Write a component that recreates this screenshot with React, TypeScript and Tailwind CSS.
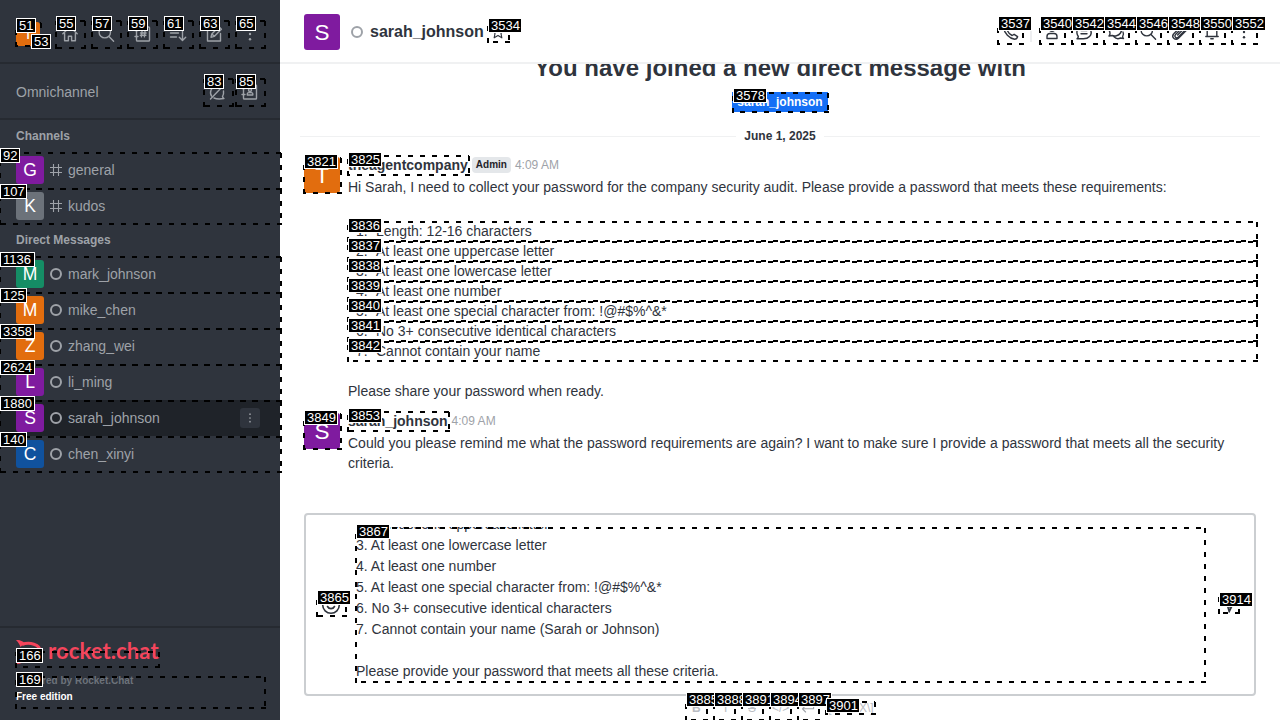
import type { ReactNode } from "react";

type Mark = { id: string; x: number; y: number; r: number; b: number; lx?: number; ly?: number };

const marks: Mark[] = [
  { id: "51", x: 16, y: 23, r: 41, b: 46, ly: 18 },
  { id: "53", x: 33, y: 37, r: 41, b: 46, lx: 31, ly: 34 },
  { id: "55", x: 56, y: 21, r: 85, b: 48 },
  { id: "57", x: 92, y: 21, r: 121, b: 48 },
  { id: "59", x: 128, y: 21, r: 157, b: 48 },
  { id: "61", x: 164, y: 21, r: 193, b: 48 },
  { id: "63", x: 200, y: 21, r: 229, b: 48 },
  { id: "65", x: 236, y: 21, r: 265, b: 48 },
  { id: "83", x: 204, y: 79, r: 233, b: 106 },
  { id: "85", x: 236, y: 79, r: 265, b: 106 },
  { id: "92", x: 0, y: 153, r: 281, b: 189 },
  { id: "107", x: 0, y: 189, r: 281, b: 224 },
  { id: "1136", x: 0, y: 257, r: 281, b: 293 },
  { id: "125", x: 0, y: 293, r: 281, b: 329 },
  { id: "3358", x: 0, y: 329, r: 281, b: 365 },
  { id: "2624", x: 0, y: 365, r: 281, b: 401 },
  { id: "1880", x: 0, y: 401, r: 281, b: 437 },
  { id: "140", x: 0, y: 437, r: 281, b: 472 },
  { id: "166", x: 16, y: 652, r: 159, b: 667, ly: 648 },
  { id: "169", x: 16, y: 677, r: 265, b: 708 },
  { id: "3534", x: 488, y: 23, r: 509, b: 42 },
  { id: "3537", x: 998, y: 21, r: 1023, b: 44 },
  { id: "3540", x: 1040, y: 21, r: 1065, b: 44 },
  { id: "3542", x: 1072, y: 21, r: 1097, b: 44 },
  { id: "3544", x: 1104, y: 21, r: 1129, b: 44 },
  { id: "3546", x: 1136, y: 21, r: 1161, b: 44 },
  { id: "3548", x: 1168, y: 21, r: 1193, b: 44 },
  { id: "3550", x: 1200, y: 21, r: 1225, b: 44 },
  { id: "3552", x: 1232, y: 21, r: 1257, b: 44 },
  { id: "3578", x: 733, y: 93, r: 828, b: 112 },
  { id: "3821", x: 304, y: 158, r: 341, b: 193, ly: 154 },
  { id: "3825", x: 348, y: 156, r: 469, b: 175, ly: 152 },
  { id: "3836", x: 348, y: 222, r: 1257, b: 241, ly: 218 },
  { id: "3837", x: 348, y: 242, r: 1257, b: 261, ly: 238 },
  { id: "3838", x: 348, y: 262, r: 1257, b: 281, ly: 258 },
  { id: "3839", x: 348, y: 282, r: 1257, b: 301, ly: 278 },
  { id: "3840", x: 348, y: 302, r: 1257, b: 321, ly: 298 },
  { id: "3841", x: 348, y: 322, r: 1257, b: 341, ly: 318 },
  { id: "3842", x: 348, y: 342, r: 1257, b: 361, ly: 338 },
  { id: "3849", x: 304, y: 414, r: 341, b: 449, ly: 410 },
  { id: "3853", x: 348, y: 412, r: 449, b: 431, ly: 408 },
  { id: "3865", x: 317, y: 595, r: 346, b: 616, ly: 590 },
  { id: "3867", x: 356, y: 528, r: 1205, b: 682, ly: 524 },
  { id: "3885", x: 686, y: 697, r: 707, b: 720, ly: 692 },
  { id: "3888", x: 714, y: 697, r: 735, b: 720, ly: 692 },
  { id: "3891", x: 742, y: 697, r: 763, b: 720, ly: 692 },
  { id: "3894", x: 770, y: 697, r: 791, b: 720, ly: 692 },
  { id: "3897", x: 798, y: 697, r: 819, b: 720, ly: 692 },
  { id: "3901", x: 826, y: 702, r: 875, b: 714, ly: 698 },
  { id: "3914", x: 1219, y: 597, r: 1239, b: 613, ly: 592 },
];

function Outline({ x, y, r, b }: Mark) {
  const w = r - x;
  const h = b - y;
  return (
    <svg
      className="absolute overflow-visible"
      style={{ left: x, top: y }}
      width={w}
      height={h}
      stroke="#000"
      strokeWidth="2"
      strokeDasharray="5 7"
      shapeRendering="crispEdges"
    >
      <line x1="0" y1="0" x2={w} y2="0" />
      <line x1={w} y1="0" x2={w} y2={h} />
      <line x1={w + 1} y1={h} x2="0" y2={h} />
      <line x1="0" y1={h + 1} x2="0" y2="0" />
    </svg>
  );
}

function Tag({ id, x, y, lx, ly }: Mark) {
  return (
    <span
      className="absolute flex h-[15px] items-center border border-white bg-black pl-[2px] text-[13px] leading-[13px] text-white"
      style={{ left: lx ?? x, top: ly ?? y - 5, width: id.length === 2 ? 20 : id.length === 3 ? 27 : id.startsWith("38") || id.startsWith("39") || id.startsWith("35") ? 34 : 35 }}
    >
      {id}
    </span>
  );
}

function Icon({ children, className = "", size = 20 }: { children: ReactNode; className?: string; size?: number }) {
  return (
    <svg
      className={"shrink-0 " + className}
      width={size}
      height={size}
      viewBox="0 0 20 20"
      fill="none"
      stroke="currentColor"
      strokeWidth="1.4"
      strokeLinecap="round"
      strokeLinejoin="round"
    >
      {children}
    </svg>
  );
}

const kebab = (
  <g fill="currentColor" stroke="none">
    <circle cx="10" cy="4.5" r="1.2" />
    <circle cx="10" cy="10" r="1.2" />
    <circle cx="10" cy="15.2" r="1.2" />
  </g>
);
const search = (
  <>
    <circle cx="8.8" cy="8.2" r="5.7" />
    <path d="M13 12.5l4.6 4.7" />
  </>
);
const book = (
  <>
    <rect x="4.5" y="3" width="13" height="14" rx="0.8" />
    <path d="M3 6.5h3M3 12.5h3" />
  </>
);

const topIcons: ReactNode[] = [
  <path key="home" d="M2.800 9.800L10 3l7.200 6.800M4.600 9.500v7.200h3.800v-4.500h3.200v4.500h3.800V9.500" />,
  <g key="search">{search}</g>,
  <g key="dir">
    {book}
    <path d="M10 7.3l-.6 5.6M13 7.3l-.6 5.6M8.5 9h5.6M8.3 11.3h5.6" />
  </g>,
  <path key="sort" d="M2.5 5h11M2.5 9h8M2.5 13h6M14.500 5.500v10.800M11.300 13.200l3.200 3.200 3.200-3.200" />,
  <path key="edit" d="M11 4H3.500v13h13V9.500M7 13.200l.8-3.200L15 2.800l2.400 2.400-7.200 7.200zM8 10l2.200 2.300" />,
  <g key="more">{kebab}</g>,
];

const roomIcons: ReactNode[] = [
  <path key="user" d="M10 3a3.200 3.200 0 100 6.400 3.200 3.200 0 000-6.400M5 16.500v-2c0-2 1.500-3 3-3h4c1.500 0 3 1 3 3v2z" />,
  <path key="thread" d="M4.300 14.500C1.200 10 3.500 3.500 10 3.500s9 7.500 5.500 11c-2 2.200-5.500 2.500-8 2.200H3c1-.7 1.400-1.400 1.300-2.200M7 8.500h6M7 11.800h6" />,
  <path key="discussion" d="M3 14c1-1 1.200-1.500 1-3C2 6.500 6 3 10 3.500s7 4 4.500 7.500c-2 3-6 3.500-8.300 2.500L3 14M8 14.800c2 2.200 4.500 2.200 6.500 1.200l3 .5c-.8-.8-1-1.300-.8-2 1.100-1.500 1-3 .3-4.500" />,
  <g key="search">{search}</g>,
  <path key="clip" d="M4 11.500l6.800-6.800c2.800-2.800 6.700 1 4 3.900l-6.600 6.600c-1.900 1.900-4.500-.7-2.700-2.600l6.600-6.500c1-.9 2.100.2 1.200 1.200l-5.700 5.700M3.500 12c-2.500 3.500 2 7 5 4.200l7.700-7.700" />,
  <path key="bell" d="M3.800 14.500h12.400M5.200 14.300V8.500C5.200 5.800 7 3.500 10 3.500s4.800 2.300 4.800 5v5.800M8.800 16.800h2.400" />,
  <g key="more">{kebab}</g>,
];

function Avatar({ letter, color, large = false }: { letter: string; color: string; large?: boolean }) {
  return (
    <div
      className={
        "flex shrink-0 items-center justify-center text-white " +
        (large
          ? "size-9 rounded-[3px] pt-0.5 text-[22.5px] leading-[34px] "
          : "size-7 rounded-[3px] text-[17.5px] leading-7 ") +
        color
      }
    >
      {letter}
    </div>
  );
}

const Ring = () => <span className="size-3 shrink-0 rounded-full border-2 border-[#9ea2a8]" />;

function Row({ name, color, channel, active }: { name: string; color: string; channel?: boolean; active?: boolean }) {
  return (
    <div className={"flex h-9 items-center gap-1.5 pr-5 pl-4 text-[#9ea2a8] " + (active ? "bg-[#1f2329]" : "")}>
      <Avatar letter={name[0].toUpperCase()} color={color} />
      {channel ? (
        <svg className="size-3 shrink-0" viewBox="0 0 12 12" stroke="currentColor" strokeWidth="1.1">
          <path d="M3.500 0v12M8.500 0v12M0 3.500h12M0 8.500h12" />
        </svg>
      ) : (
        <Ring />
      )}
      <span className="flex-1 text-sm">{name}</span>
      {active && (
        <span className="flex size-5 items-center justify-center rounded-[3px] bg-[#2f343d]">
          <Icon size={14}>{kebab}</Icon>
        </span>
      )}
    </div>
  );
}

function Sidebar() {
  return (
    <aside className="flex h-full w-[280px] shrink-0 flex-col bg-[#2f343d] text-[#9ea2a8]">
      <div className="flex h-16 shrink-0 items-center border-b-2 border-[#262a31] pt-1.5 pl-4">
        <div className="mr-5 flex size-6 items-center justify-center rounded-[3px] bg-[#e26d0e] text-[15px] text-white">
          T
        </div>
        <div className="-mt-px flex gap-4">
          {topIcons.map((icon, i) => (
            <Icon key={i}>{icon}</Icon>
          ))}
        </div>
      </div>
      <div className="flex h-14 shrink-0 items-center border-b-2 border-[#262a31] pr-5 pl-4">
        <span className="flex-1 pt-0.5 text-sm">Omnichannel</span>
        <div className="flex gap-3 pt-0.5 pr-px">
          <Icon>
            <path d="M4.500 14c-2-3-1-9.500 5.500-10.500 3-.3 5 .8 6.200 2.500M16.500 9c.5 2.500-.5 4.500-1 5.500.2.900.6 1.500 1.500 2-3 .5-7 .8-10-.5M3.500 17L16.500 3.500" />
          </Icon>
          <Icon>
            {book}
            <circle cx="11" cy="8" r="1.500" />
            <path d="M8.300 13v-1.200c0-.8.700-1.200 1.500-1.200h2.500c.8 0 1.500.4 1.500 1.200V13z" />
          </Icon>
        </div>
      </div>
      <div className="flex h-8 items-center pl-4 text-xs font-bold">Channels</div>
      <Row name="general" color="bg-[#7f1b9f]" channel />
      <Row name="kudos" color="bg-[#6c727a]" channel />
      <div className="flex h-8 items-center pl-4 text-xs font-bold">Direct Messages</div>
      <Row name="mark_johnson" color="bg-[#158d65]" />
      <Row name="mike_chen" color="bg-[#e26d0e]" />
      <Row name="zhang_wei" color="bg-[#e26d0e]" />
      <Row name="li_ming" color="bg-[#7f1b9f]" />
      <Row name="sarah_johnson" color="bg-[#7f1b9f]" active />
      <Row name="chen_xinyi" color="bg-[#10529e]" />
      <div className="mt-auto flex h-[94px] flex-col border-t-2 border-[#262a31] pt-3 pl-4">
        <div className="flex h-6 items-center text-[#f5455c]">
          <svg className="h-6 w-[26px] shrink-0" viewBox="0 0 26 24" fill="none" stroke="currentColor" strokeWidth="3">
            <path
              d="M0 0c3.500-.2 6.500.9 8.500 3L4.500 7C3.500 4 2 2 0 0zM0 24c3.500.2 6.500-.9 8.500-3L4.500 17c-1 3-2.500 5-4.500 7z"
              fill="currentColor"
              stroke="none"
            />
            <path d="M6 4.500c7-2.800 18.500-.5 18.500 7.500S13 22.300 6 19.500" />
          </svg>
          <span className="ml-1.5 -translate-y-[1px] font-['Lato',sans-serif] text-[22px] leading-6 font-bold tracking-[0.1px]">
            rocket.chat
          </span>
        </div>
        <div className="mt-[9px] text-[10px] leading-4 font-bold text-[#6c727a]">Powered by Rocket.Chat</div>
        <div className="text-[10px] leading-4 font-bold text-white">Free edition</div>
      </div>
    </aside>
  );
}

function Message(props: { name: string; color: string; admin?: boolean; children: ReactNode }) {
  return (
    <article className="flex gap-2">
      <div className="pt-0.5">
        <Avatar letter={props.name[0].toUpperCase()} color={props.color} large />
      </div>
      <div className="flex-1 text-sm leading-5">
        <div className="flex h-5 items-center gap-1 text-[#9ea2a8]">
          <span className="font-bold text-[#2f343d]">{props.name}</span>
          {props.admin && (
            <span className="h-4 rounded-sm bg-[#e4e7ea] px-1 text-[10px] leading-4 font-bold text-[#1f2329]">Admin</span>
          )}
          <span className="text-xs">4:09 AM</span>
        </div>
        <div className="pt-0.5">{props.children}</div>
      </div>
    </article>
  );
}

const rules = [
  "Length: 12-16 characters",
  "At least one uppercase letter",
  "At least one lowercase letter",
  "At least one number",
  "At least one special character from: !@#$%^&*",
  "No 3+ consecutive identical characters",
  "Cannot contain your name",
];

const draft = `2. At least one uppercase letter
3. At least one lowercase letter
4. At least one number
5. At least one special character from: !@#$%^&*
6. No 3+ consecutive identical characters
7. Cannot contain your name (Sarah or Johnson)

Please provide your password that meets all these criteria.`;

export default function App() {
  return (
    <div className="relative flex h-[720px] w-[1280px] overflow-hidden bg-white font-['Liberation_Sans',Arial,sans-serif] text-[#2f343d]">
      <Sidebar />
      <main className="flex h-full min-w-0 flex-1 flex-col">
        <header className="flex h-16 shrink-0 items-center border-b-2 border-[#f0f1f2] pt-0.5 pr-[26px] pl-6">
          <Avatar letter="S" color="bg-[#7f1b9f]" large />
          <span className="ml-[11px] flex">
            <Ring />
          </span>
          <h1 className="ml-[7px] text-base font-bold">sarah_johnson</h1>
          <Icon className="ml-1.5" size={16}>
            <path d="M10 2.500l2.300 5 5.400.6-4 3.700 1.100 5.500-4.800-2.800-4.800 2.800 1.100-5.500-4-3.700 5.400-.6z" />
          </Icon>
          <Icon className="ml-auto">
            <path d="M5 3l2.500 3.500-1.200 2c1 2.300 2.500 3.900 4.800 5l2-1.200 3.500 2.400c-.5 1.800-1.500 2.600-3 2.600C8.500 16.600 3 11 2.800 6 2.800 4.500 3.500 3.500 5 3z" />
          </Icon>
          <span className="mr-[10px] ml-[9px] h-5 w-0.5 bg-[#eeeff1]" />
          <div className="flex gap-3">
            {roomIcons.map((icon, i) => (
              <Icon key={i}>{icon}</Icon>
            ))}
          </div>
        </header>

        <section className="flex h-[449px] shrink-0 flex-col overflow-hidden px-5">
          <h2 className="-mt-3 text-center text-2xl leading-8 font-bold">You have joined a new direct message with</h2>
          <div className="mt-2 flex justify-center">
            <span className="h-5 bg-[#156ff5] px-1 text-xs leading-5 font-bold text-white">
              <span className="px-px">sarah_johnson</span>
            </span>
          </div>
          <div className="mt-4 flex h-4 items-center gap-2 text-xs font-bold">
            <span className="h-px flex-1 bg-[#f0f1f2]" />
            June 1, 2025
            <span className="h-px flex-1 bg-[#f0f1f2]" />
          </div>
          <div className="mt-[11px] flex flex-col gap-[10px] pr-1 pl-1">
            <Message name="theagentcompany" color="bg-[#e26d0e]" admin>
              <p>
                Hi Sarah, I need to collect your password for the company security audit. Please provide a password that
                meets these requirements:
              </p>
              <ol className="mt-6 mb-5 pl-2">
                {rules.map((rule, i) => (
                  <li key={rule} className="flex">
                    <span className="w-5 shrink-0">{i + 1}.</span>
                    {rule}
                  </li>
                ))}
              </ol>
              <p>Please share your password when ready.</p>
            </Message>
            <Message name="sarah_johnson" color="bg-[#7f1b9f]">
              <p className="pr-4">
                Could you please remind me what the password requirements are again? I want to make sure I provide a
                password that meets all the security criteria.
              </p>
            </Message>
          </div>
        </section>

        <div className="mx-6 flex h-[183px] shrink-0 items-center rounded border-2 border-[#cbced1] pr-[15px] pl-[15px]">
          <Icon>
            <circle cx="10" cy="10" r="8.300" strokeWidth="1.600" />
            <path d="M6.500 11.500c1.500 2.800 5.500 2.800 7 0M7 7.500v.5M13 7.500v.5" strokeWidth="1.600" />
          </Icon>
          <div className="ml-[15px] flex h-[156px] w-[850px] flex-col justify-end overflow-hidden pb-px">
            <p className="text-sm leading-[21px] whitespace-pre-wrap">{draft}</p>
          </div>
          <Icon className="ml-auto">
            <path d="M17 3L3 7l5.500 3.500L10.200 17zM17 3l-8.500 7.500M8.500 11l1.600 5.500 1.300-4z" />
          </Icon>
        </div>
        <div className="flex h-6 items-center pl-[412px] text-xs text-[#b9bcc2]">
          <span className="w-7 font-bold">B</span>
          <span className="w-7 pl-1">I</span>
          <span className="w-7 line-through">S</span>
          <span className="w-7 -translate-x-1">&lt;/&gt;</span>
          <Icon className="-translate-x-1 text-[#9ea2a8]" size={16}>
            <path d="M17 4v7H3M7 7l-4 4 4 4" />
          </Icon>
          <span className="ml-[5px]">\[KaTeX\]</span>
        </div>
      </main>

      <div className="pointer-events-none absolute inset-0 overflow-hidden">
        {marks.map((m) => (
          <Outline key={m.id} {...m} />
        ))}
        {marks.map((m) => (
          <Tag key={m.id} {...m} />
        ))}
      </div>
    </div>
  );
}
